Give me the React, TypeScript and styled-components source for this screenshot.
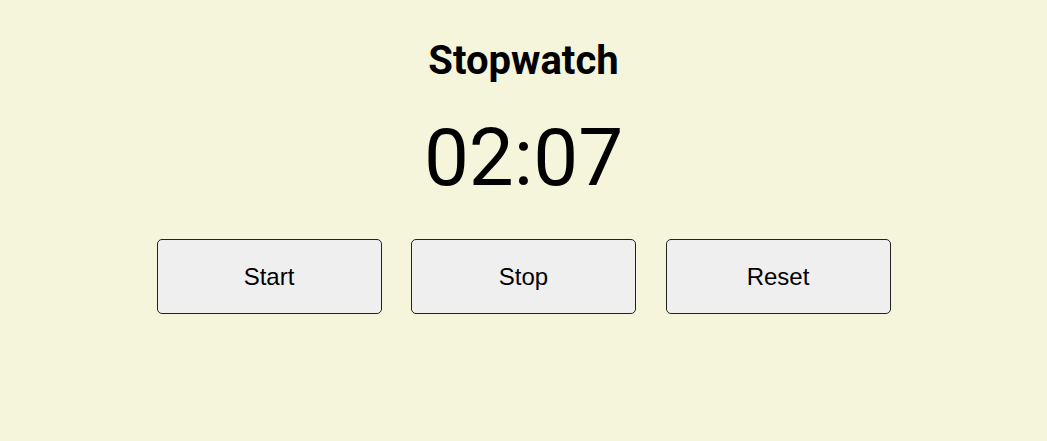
import React, { FC } from 'react';
import styled, { createGlobalStyle } from 'styled-components';

const GlobalStyle = createGlobalStyle`
  html, body {
    margin: 0;
    padding: 0;
    background: #f5f5dc;
  }
`;

const StyledStopwatch = styled.div`
  display: flex;
  flex-direction: column;
  align-items: center;
  padding-top: 38px;
  font-family: Roboto, sans-serif;
  color: #000;
`;

const Title = styled.h1`
  margin: 0;
  font-size: 40px;
  font-weight: 700;
  line-height: 46px;
`;

const Time = styled.div`
  margin-top: 27px;
  font-size: 80px;
  font-weight: 400;
  line-height: 94px;
`;

const Controls = styled.div`
  display: flex;
  gap: 29.5px;
  margin-top: 34px;
`;

const ControlButton = styled.button`
  width: 225px;
  height: 75px;
  border: 1px solid #222;
  border-radius: 5px;
  background: #efefef;
  font-family: 'Liberation Sans', Arial, sans-serif;
  font-size: 24px;
  color: #000;
  cursor: pointer;
`;

const App: FC = () => {
  return (
    <>
      <GlobalStyle />
      <StyledStopwatch>
        <Title>Stopwatch</Title>
        <Time>02:07</Time>
        <Controls>
          <ControlButton>Start</ControlButton>
          <ControlButton>Stop</ControlButton>
          <ControlButton>Reset</ControlButton>
        </Controls>
      </StyledStopwatch>
    </>
  );
};

export default App;
